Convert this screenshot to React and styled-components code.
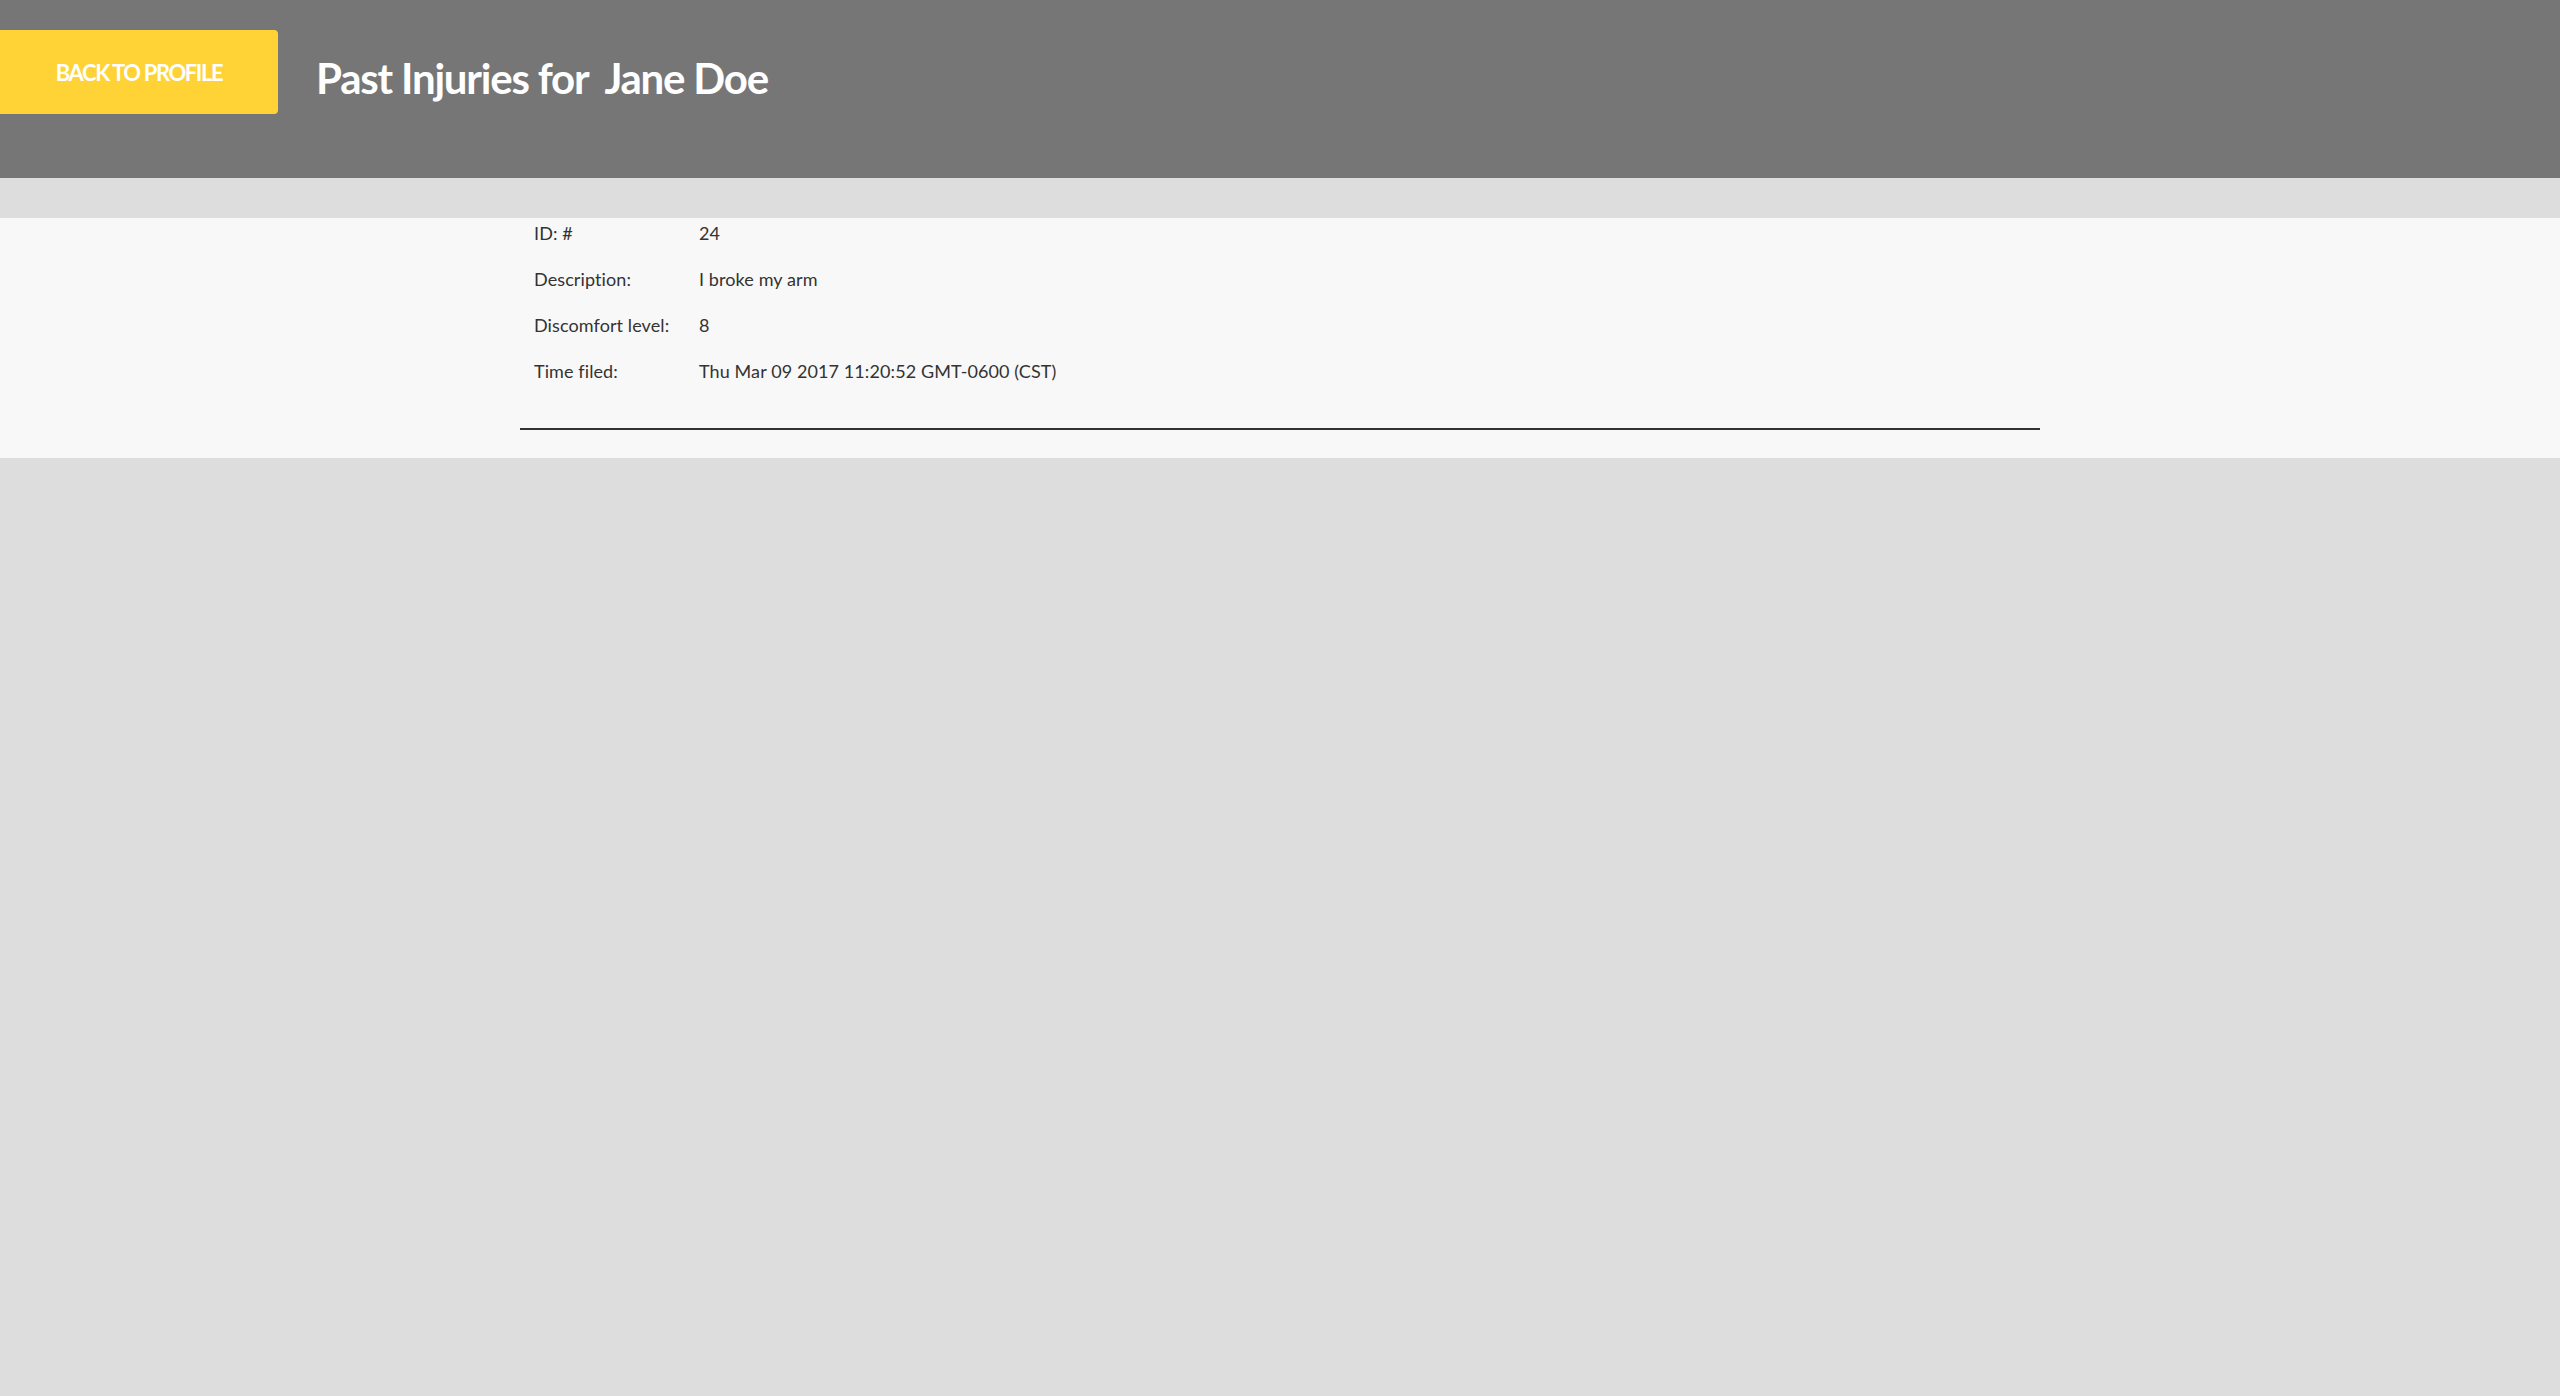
import React from "react";
import styled, { createGlobalStyle } from "styled-components";

const GlobalStyle = createGlobalStyle`
  html, body {
    margin: 0;
    padding: 0;
    background: #dddddd;
    font-family: Lato, "Open Sans", "Liberation Sans", sans-serif;
  }
`;

const Header = styled.header`
  display: flex;
  align-items: flex-start;
  height: 178px;
  padding-top: 30px;
  box-sizing: border-box;
  background: #767676;
`;

const BackButton = styled.button`
  width: 278px;
  height: 84px;
  border: none;
  border-radius: 0 4px 4px 0;
  background: #ffd336;
  color: #ffffff;
  font-family: Lato, sans-serif;
  font-weight: 700;
  font-size: 22px;
  letter-spacing: -1.4px;
  text-transform: uppercase;
  cursor: pointer;
`;

const Title = styled.h1`
  margin: 23px 0 0 38px;
  color: #ffffff;
  font-family: Lato, sans-serif;
  font-weight: 700;
  font-size: 42px;
  line-height: 1.2;
  letter-spacing: -1.2px;
  white-space: pre;
`;

const Band = styled.div`
  height: 40px;
  background: #dddddd;
`;

const Section = styled.section`
  background: #f8f8f8;
  padding: 2px 0 28px;
`;

const Injury = styled.div`
  width: 1520px;
  margin: 0 auto;
`;

const Fields = styled.div`
  display: grid;
  grid-template-columns: 165px 1fr;
  row-gap: 20px;
  padding: 0 14px;
`;

const Label = styled.div`
  font-size: 18px;
  line-height: 26px;
  letter-spacing: 0.1px;
  color: #333333;
`;

const Value = styled(Label)``;

const Rule = styled.hr`
  margin: 44px 0 0;
  border: none;
  height: 2px;
  background: #333333;
`;

const injury = {
  id: 24,
  description: "I broke my arm",
  discomfort: 8,
  filed: "Thu Mar 09 2017 11:20:52 GMT-0600 (CST)",
};

export default function App() {
  return (
    <>
      <GlobalStyle />
      <Header>
        <BackButton>Back to profile</BackButton>
        <Title>{"Past Injuries for  Jane Doe"}</Title>
      </Header>
      <Band />
      <Section>
        <Injury>
          <Fields>
            <Label>ID: #</Label>
            <Value>{injury.id}</Value>
            <Label>Description:</Label>
            <Value>{injury.description}</Value>
            <Label>Discomfort level:</Label>
            <Value>{injury.discomfort}</Value>
            <Label>Time filed:</Label>
            <Value>{injury.filed}</Value>
          </Fields>
          <Rule />
        </Injury>
      </Section>
    </>
  );
}
